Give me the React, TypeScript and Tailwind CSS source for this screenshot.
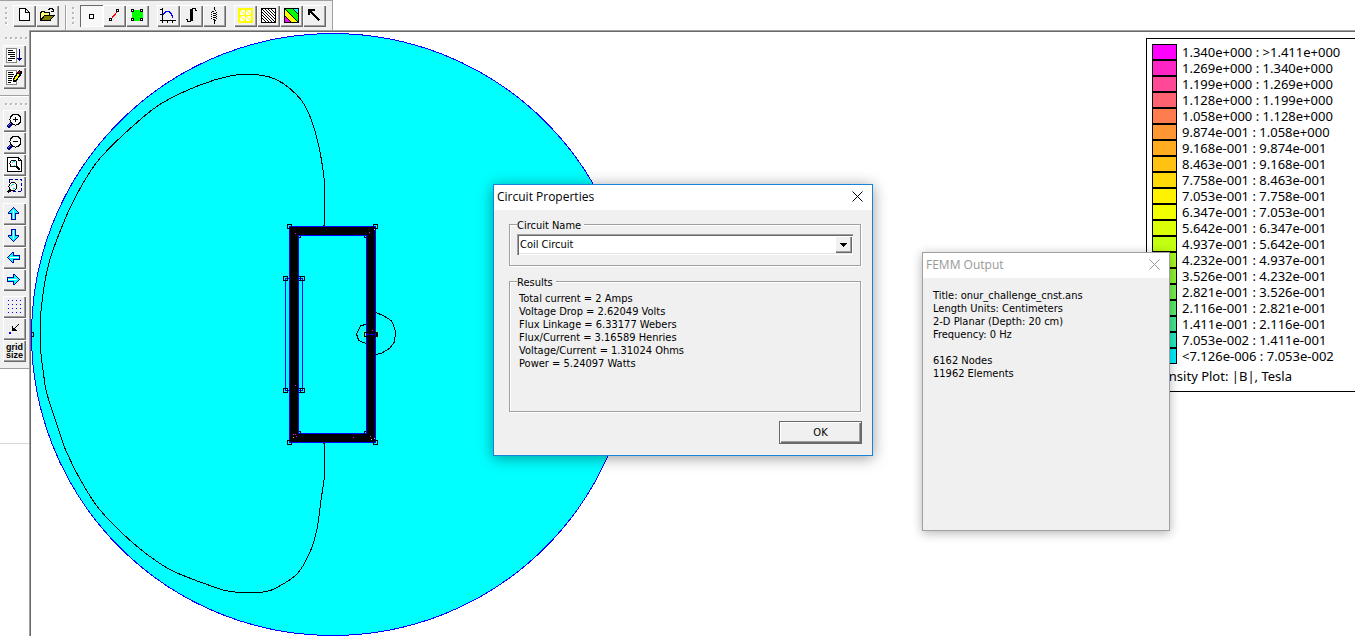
import type { ReactNode } from "react";

const BANDS: [string, string][] = [
  ["#ff00ff", "1.340e+000 : >1.411e+000"],
  ["#ff24c4", "1.269e+000 : 1.340e+000"],
  ["#ff4896", "1.199e+000 : 1.269e+000"],
  ["#ff6270", "1.128e+000 : 1.199e+000"],
  ["#ff7c4e", "1.058e+000 : 1.128e+000"],
  ["#ff9634", "9.874e-001 : 1.058e+000"],
  ["#ffac20", "9.168e-001 : 9.874e-001"],
  ["#ffc212", "8.463e-001 : 9.168e-001"],
  ["#ffda08", "7.758e-001 : 8.463e-001"],
  ["#fff200", "7.053e-001 : 7.758e-001"],
  ["#f2ff00", "6.347e-001 : 7.053e-001"],
  ["#daff06", "5.642e-001 : 6.347e-001"],
  ["#c2ff10", "4.937e-001 : 5.642e-001"],
  ["#a8fa20", "4.232e-001 : 4.937e-001"],
  ["#8ef634", "3.526e-001 : 4.232e-001"],
  ["#74f24e", "2.821e-001 : 3.526e-001"],
  ["#5aee6c", "2.116e-001 : 2.821e-001"],
  ["#40ea92", "1.411e-001 : 2.116e-001"],
  ["#24ecc0", "7.053e-002 : 1.411e-001"],
  ["#00f0ff", "<7.126e-006 : 7.053e-002"],
];

const RESULTS = [
  "Total current = 2 Amps",
  "Voltage Drop = 2.62049 Volts",
  "Flux Linkage = 6.33177 Webers",
  "Flux/Current = 3.16589 Henries",
  "Voltage/Current = 1.31024 Ohms",
  "Power = 5.24097 Watts",
];

function ToolButton({ label, pressed, children }: { label: string; pressed?: boolean; children: ReactNode }) {
  return (
    <button
      type="button"
      aria-label={label}
      aria-pressed={pressed}
      className={
        pressed
          ? "block h-[22px] w-[23px] shrink-0 bg-[#f8f8f8] shadow-[inset_1px_1px_0_#696969,inset_-1px_-1px_0_#fff]"
          : "block h-[22px] w-[23px] shrink-0 bg-[#f0f0f0] shadow-[inset_1px_1px_0_#fff,inset_-1px_-1px_0_#696969,inset_-2px_-2px_0_#a0a0a0]"
      }
    >
      {children}
    </button>
  );
}

function Icon({ children }: { children: ReactNode }) {
  return (
    <svg width="23" height="22" viewBox="0 0 23 22" shapeRendering="crispEdges" fill="none" stroke="#000" aria-hidden="true" className="block">
      {children}
    </svg>
  );
}

function Grip({ vertical }: { vertical?: boolean }) {
  return (
    <div className={vertical ? "flex flex-col gap-[3px]" : "flex gap-[3px]"} aria-hidden="true">
      {[0, 1, 2, 3, 4].slice(vertical ? 1 : 0).map((i) => (
        <span key={i} className="size-[2px] bg-[#b8b8b8] shadow-[1px_1px_0_#fff]" />
      ))}
    </div>
  );
}

function Magnifier({ mark }: { mark: "plus" | "minus" }) {
  return (
    <Icon>
      <path d="M8.5 13.5L4.5 17.5" stroke="#000080" strokeWidth="3" />
      <path d="M7.5 13.5L4.5 16.5" stroke="#7878d8" />
      <circle cx="12.5" cy="9.5" r="5.5" fill="#f8f8f8" />
      <path d="M10 9.5h5" />
      {mark === "plus" && <path d="M12.5 7v5" />}
    </Icon>
  );
}

const ARROW_ANGLE = { up: 0, right: 90, down: 180, left: 270 };

function BlockArrow({ to }: { to: keyof typeof ARROW_ANGLE }) {
  return (
    <Icon>
      <g transform={`rotate(${ARROW_ANGLE[to]} 10.5 10.5)`}>
        <path d="M10.5 4.5L5.5 9.5V10.5H8.5V16.5H12.5V10.5H15.5V9.5Z" fill="#00ffff" stroke="#0000a8" />
        <path d="M10.5 7v9" stroke="#fff" />
      </g>
    </Icon>
  );
}

function TopToolbar() {
  return (
    <div className="flex h-[30px] w-[333px] border-t border-r border-[#a0a0a0] bg-[#f0f0f0] pt-1" role="toolbar" aria-label="Main">
      <div className="flex w-[66px] border-r border-[#a0a0a0] pl-[5px]">
        <div className="w-2 pt-[2px]"><Grip vertical /></div>
        <ToolButton label="New">
          <Icon><path d="M6.5 3.5h6l4 4v8h-10zM12.5 3.5v4h4" fill="#fff" /></Icon>
        </ToolButton>
        <ToolButton label="Open">
          <Icon>
            <path d="M4.5 15.5v-8h1v-1h3v1h5v3" fill="#ffff70" />
            <path d="M4.5 15.5L8.5 10.5H18L14 15.5Z" fill="#808000" />
            <path d="M12 4.5h1v-1h3v1h1v2M14.5 6.5h3v-2" />
          </Icon>
        </ToolButton>
      </div>
      <div className="flex border-l border-white pl-[5px]">
        <div className="w-2 pt-[2px]"><Grip vertical /></div>
        <ToolButton label="Point" pressed>
          <Icon><rect x="9.5" y="9.5" width="4" height="4" fill="#fff" /></Icon>
        </ToolButton>
        <ToolButton label="Contour">
          <Icon>
            <path d="M8 14L15 6" stroke="#f00" />
            <rect x="6.5" y="13.5" width="2" height="2" fill="#fff" />
            <rect x="13.5" y="4.5" width="2" height="2" fill="#fff" />
          </Icon>
        </ToolButton>
        <ToolButton label="Area">
          <Icon>
            <rect x="6" y="5" width="11" height="11" fill="#0f0" stroke="none" />
            <g fill="#fff">
              <rect x="5.5" y="4.5" width="2" height="2" /><rect x="14.5" y="4.5" width="2" height="2" />
              <rect x="5.5" y="13.5" width="2" height="2" /><rect x="14.5" y="13.5" width="2" height="2" />
            </g>
          </Icon>
        </ToolButton>
        <div className="ml-2 flex">
          <ToolButton label="Plot">
            <Icon>
              <path d="M5.5 3v15M3 15.5h15.5M3 4.5h2M3 9.5h2M10.5 15v3M15.5 15v3" />
              <path d="M6.5 10V8.5H7.5V7.5H8.5V6.5H12.5V7.5H13.5V8.5H14.5V10.5H15.5V13" stroke="#0000ff" />
            </Icon>
          </ToolButton>
          <ToolButton label="Integrate">
            <Icon>
              <path d="M11.5 4v12" strokeWidth="3" />
              <path d="M12 3.5h4M15.5 3v3M14.5 5.5h2M7 16.5h4M7.5 14v3M6 14.5h2" />
            </Icon>
          </ToolButton>
          <ToolButton label="Circuit">
            <Icon>
              <path d="M11.5 2v3M11.5 16v3M12 5.5h1M9 6.5h2M13 7.5h1M10 8.5h3M13 9.5h1M10 10.5h3M13 11.5h1M10 12.5h3M13 13.5h1M10 14.5h2M11 15.5h2M8 7.5h1M8 9.5h1M8 11.5h1M8 13.5h1" />
            </Icon>
          </ToolButton>
        </div>
        <div className="ml-2 flex">
          <ToolButton label="Show mesh">
            <Icon>
              <rect x="4.5" y="3.5" width="14" height="14" fill="#fffff0" stroke="#ff0" />
              <rect x="5.5" y="4.5" width="12" height="12" stroke="#ff0" />
              <path d="M11.5 4v13M5 10.5h13M6 5l5 5M12 5l5 5M6 11l5 5M12 11l5 5" stroke="#ff0" />
            </Icon>
          </ToolButton>
          <ToolButton label="Contour plot">
            <Icon>
              <rect x="4.5" y="3.5" width="14" height="14" fill="#fff" />
              <path d="M5 4L18 17M8 4L18 14M11 4L18 11M14 4L18 8M5 7L15 17M5 10L12 17M5 13L9 17" />
            </Icon>
          </ToolButton>
          <ToolButton label="Density plot">
            <Icon>
              <rect x="4.5" y="3.5" width="14" height="14" fill="#ff0" />
              <path d="M5 4h8l5 5v8z" fill="#0f0" stroke="none" />
              <path d="M13 4h5v5z" fill="#0ff" stroke="none" />
              <path d="M5 11v6h6z" fill="#f0f" stroke="none" />
              <path d="M5 4L18 17M13 4l5 5M5 11l6 6M4.5 3.5h14v14h-14z" />
            </Icon>
          </ToolButton>
          <ToolButton label="Vector plot">
            <Icon>
              <path d="M6 5L16.5 15.5" strokeWidth="2" />
              <path d="M5 10V4h7v2H8L7 7v3z" fill="#000" stroke="none" />
            </Icon>
          </ToolButton>
        </div>
      </div>
    </div>
  );
}

function SideToolbar() {
  return (
    <div className="flex h-[339px] flex-col border-b border-[#a0a0a0] bg-[#f0f0f0] pl-[3px]" role="toolbar" aria-label="View">
      <div className="pt-[7px] pb-[6px] pl-[2px]"><Grip /></div>
      <ToolButton label="Output window">
        <Icon>
          <rect x="3.5" y="3.5" width="10" height="14" fill="#fff" stroke="#888" />
          <path d="M5 5.5h5M5 7.5h7M5 9.5h7M7 11.5h5M5 13.5h7M5 15.5h4" />
          <path d="M16.5 4v12M14 13.5h5M15 14.5h3" stroke="#000080" />
        </Icon>
      </ToolButton>
      <ToolButton label="Lua console">
        <Icon>
          <rect x="3.5" y="3.5" width="10" height="14" fill="#fff" stroke="#888" />
          <path d="M5 5.5h5M5 7.5h6M5 9.5h5M5 11.5h4M5 13.5h4M5 15.5h3" />
          <path d="M10.5 14.5V12L14.500 5.500L16.500 3.500L18.500 5L17.500 8L13 14Z" fill="#000" />
          <path d="M12 13L15.500 7.500" stroke="#ff0" strokeWidth="2" />
          <path d="M15.500 6L17 4.500" stroke="#c00" strokeWidth="2" />
        </Icon>
      </ToolButton>
      <div className="-ml-[3px] mt-[6px] border-t border-[#a0a0a0] pt-[7px] pb-[5px] pl-[5px] shadow-[inset_0_1px_0_#fff]"><Grip /></div>
      <ToolButton label="Zoom in"><Magnifier mark="plus" /></ToolButton>
      <ToolButton label="Zoom out"><Magnifier mark="minus" /></ToolButton>
      <ToolButton label="Zoom to page">
        <Icon>
          <path d="M4.5 3.5h11l3 3v11h-14zM15.5 3.5v3h3" fill="#fff" />
          <circle cx="10.5" cy="9.5" r="3.5" fill="#fff" />
          <path d="M9 8.5h1M10 7.5h2M11 11.5h1" stroke="#0dd" />
          <path d="M13 12L17 16" strokeWidth="2" />
        </Icon>
      </ToolButton>
      <ToolButton label="Zoom to window">
        <Icon>
          <rect x="6.5" y="3.5" width="12" height="12" stroke="#0000a0" strokeDasharray="3 2" />
          <circle cx="10" cy="10.5" r="4" fill="#f8f8f8" />
          <path d="M8 9.5h1M9 8.5h2M10 12.5h2" stroke="#0dd" />
          <path d="M7.5 13.5L4.5 16.5" strokeWidth="2" />
        </Icon>
      </ToolButton>
      <div className="mt-[5px] flex flex-col">
        <ToolButton label="Pan up"><BlockArrow to="up" /></ToolButton>
        <ToolButton label="Pan down"><BlockArrow to="down" /></ToolButton>
        <ToolButton label="Pan left"><BlockArrow to="left" /></ToolButton>
        <ToolButton label="Pan right"><BlockArrow to="right" /></ToolButton>
      </div>
      <div className="mt-[5px] flex flex-col">
        <ToolButton label="Show grid">
          <Icon>
            <path d="M5 4.5h14M5 8.5h14M5 12.5h14M5 16.5h14" stroke="#0000ff" strokeDasharray="1 3" />
          </Icon>
        </ToolButton>
        <ToolButton label="Snap to grid">
          <Icon>
            <path d="M16 6L10 12M9.500 8v4.500h4.500M10.500 10v1.500h2" />
            <rect x="6" y="14" width="2" height="2" fill="#00f" stroke="none" />
          </Icon>
        </ToolButton>
        <ToolButton label="Grid size">
          <span className='block text-center font-["Liberation_Sans",sans-serif] text-[9px] leading-[8px] font-bold text-black'>grid<br />size</span>
        </ToolButton>
      </div>
    </div>
  );
}

function Node({ x, y }: { x: number; y: number }) {
  return <rect x={x - 2 + 0.5} y={y - 2 + 0.5} width="4" height="4" fill="none" stroke="#000" />;
}

type Point = [number, number];

const FLUX_LINE: Point[] = [
  [323.5, 226], [324.5, 222], [324.5, 184], [320.5, 154.5], [315.5, 133], [310, 116.5], [301.5, 100.5], [288, 87],
  [275, 79], [263, 75.5], [248, 74.5], [230, 76], [200, 85], [163, 102.5], [138, 121.5], [102, 156], [85, 180],
  [71, 206], [61, 229], [51, 256], [45.5, 278], [42.5, 298], [40.5, 319], [40.5, 348], [43.5, 373], [47, 394],
  [62, 440], [67, 453], [80, 479], [100, 510], [133, 543], [163, 565.5], [182, 575], [217, 588], [230, 591.5],
  [248, 592.5], [263, 592], [275, 588.5], [297, 574], [310, 552], [317, 529], [321, 500], [324.5, 475], [324.5, 447],
  [323.5, 443],
];

/** Catmull-Rom spline through the given points, as cubic Bézier segments. */
function spline(points: Point[]) {
  let d = `M${points[0].join(" ")}`;
  for (let i = 0; i < points.length - 1; i++) {
    const a = points[Math.max(i - 1, 0)];
    const b = points[i];
    const c = points[i + 1];
    const e = points[Math.min(i + 2, points.length - 1)];
    d += `C${b[0] + (c[0] - a[0]) / 6} ${b[1] + (c[1] - a[1]) / 6} ${c[0] - (e[0] - b[0]) / 6} ${c[1] - (e[1] - b[1]) / 6} ${c[0]} ${c[1]}`;
  }
  return d;
}

function FieldPlot() {
  return (
    <svg width="600" height="604" viewBox="31 32 600 604" shapeRendering="crispEdges" className="block shrink-0" role="img" aria-label="Flux density plot">
      <circle cx="332.5" cy="334.5" r="301" fill="#00ffff" stroke="#0000ff" />
      <path d={spline(FLUX_LINE)} fill="none" stroke="#000" />
      <polyline points="376,312.500 384,316 391,320.500 393.500,325 395.500,332 394.500,342 390,348 382,353 376,354.500" fill="none" stroke="#000" />
      <path d="M289.5 226.5h86v216h-86z" fill="#000" stroke="#0000ff" />
      <path d="M298.5 235.5h68v198h-68z" fill="#00ffff" stroke="#0000ff" />
      <rect x="362" y="331" width="4" height="7" fill="#30ffc8" />
      <rect x="376" y="331" width="3" height="6" fill="#30ffc8" />
      <polyline points="366,324.500 361,325.500 358.500,330 356.500,334 358.500,340 362,342 366,343.500" fill="none" stroke="#000" />
      <path d="M289 278.500h-3.500v112h3.500M299 278.500h3.500v112H299" fill="none" stroke="#0000ff" />
      <Node x={289} y={226} /><Node x={375} y={226} /><Node x={289} y={442} /><Node x={375} y={442} />
      <Node x={285} y={278} /><Node x={302} y={278} /><Node x={285} y={390} /><Node x={302} y={390} />
      <path d="M287.500 276v5M287.500 388v5M300.500 276v5M300.500 388v5M299 276.500h2M299 280.500h2M299 388.500h2M299 392.500h2" stroke="#000" />
      <path d="M299 237.500h1.500V236M366 237.500h-1.500V236M299 431.500h1.500V434M366 431.500h-1.500V434" fill="none" stroke="#000" />
      <Node x={366} y={334} /><Node x={375} y={334} />
      <path d="M374.500 332v5M376.500 332v5" stroke="#000" />
      <path d="M367 334.500h2M370 334.500h4M375 334.500h1" stroke="#0000ff" />
      <path d="M31.500 332.500h2v4h-2" fill="none" stroke="#000" />
      <path d="M295 233.500h1M369 232.500h1M372 330.500h1M295 385.500h1M293 434.500h1M295 434.500h1M296 436.500h1M353 437.500h1M370 436.500h1" stroke="#ff00ff" />
      <path d="M374 229.500h1M374 438.500h1M371 439.500h1M293 437.500h1" stroke="#ffb020" />
    </svg>
  );
}

function Legend() {
  return (
    <div className='mt-[6px] h-[354px] w-[209px] shrink-0 border-y border-l border-black bg-white pt-[5px] pl-[5px] font-["Noto_Sans","Open_Sans",sans-serif] text-[13px] leading-4 text-black'>
      <ul>
        {BANDS.map(([color, text]) => (
          <li key={text} className="flex gap-[5px] whitespace-nowrap">
            <span className="h-4 w-[25px] border border-black" style={{ backgroundColor: color }} />
            {text}
          </li>
        ))}
      </ul>
      <p className="mt-1">Density Plot: |B|, Tesla</p>
    </div>
  );
}

function CloseGlyph() {
  return (
    <svg width="11" height="11" viewBox="0 0 11 11" stroke="currentColor" aria-hidden="true">
      <path d="M0.5 0.5l10 10M10.5 0.5l-10 10" />
    </svg>
  );
}

function TitleBar({ title, className }: { title: string; className: string }) {
  return (
    <div className={`flex h-[25px] items-center justify-between bg-white pr-[9px] pb-[2px] pl-[3px] font-["Open_Sans","Noto_Sans",sans-serif] text-[12px] ${className}`}>
      <h2>{title}</h2>
      <button type="button" aria-label={`Close ${title}`}><CloseGlyph /></button>
    </div>
  );
}

const GROUP = "border border-[#a0a0a0] px-[7px] shadow-[1px_1px_0_#fff,inset_1px_1px_0_#fff]";
const GROUP_TITLE = "bg-[#f0f0f0] pt-[2px] pr-[3px] leading-[13px]";

function CircuitDialog() {
  return (
    <section role="dialog" aria-label="Circuit Properties" className="absolute top-[184px] left-[493px] flex h-[272px] w-[380px] flex-col border border-[#1883d7] bg-[#f0f0f0] shadow-[0_2px_14px_rgba(0,0,0,0.4)]">
      <TitleBar title="Circuit Properties" className="text-black" />
      <div className="flex flex-1 flex-col pt-[7px] pr-[11px] pl-[15px]">
        <fieldset className={`${GROUP} h-[49px]`}>
          <legend className={GROUP_TITLE}>
            <label htmlFor="circuit">Circuit Name</label>
          </legend>
          <div className="relative mt-[2px] h-[21px] bg-white shadow-[inset_1px_1px_0_#a0a0a0,inset_2px_2px_0_#696969,inset_-1px_-1px_0_#fff,inset_-2px_-2px_0_#e3e3e3]">
            <select id="circuit" className="block h-[22px] w-full appearance-none bg-transparent pl-[3px] leading-[22px] outline-none">
              <option>Coil Circuit</option>
            </select>
            <span className="pointer-events-none absolute top-[2px] right-px flex h-[17px] w-[17px] items-center justify-center bg-[#f0f0f0] shadow-[inset_1px_1px_0_#fff,inset_-1px_-1px_0_#696969,inset_-2px_-2px_0_#a0a0a0]">
              <svg width="7" height="4" viewBox="0 0 7 4" shapeRendering="crispEdges" aria-hidden="true"><path d="M0 0h7v1h-1v1h-1v1h-1v1h-1v-1h-1v-1h-1v-1h-1z" /></svg>
            </span>
          </div>
        </fieldset>
        <fieldset className={`${GROUP} mt-2 h-[138px]`}>
          <legend className={GROUP_TITLE}>Results</legend>
          <div className="mt-[3px] pl-[2px] leading-[13px]">
            {RESULTS.map((line) => <p key={line}>{line}</p>)}
          </div>
        </fieldset>
        <button type="button" className="-mr-px mt-[9px] h-[23px] w-[83px] self-end border border-[#696969] bg-[#f0f0f0] pt-px shadow-[inset_1px_1px_0_#fff,inset_-1px_-1px_0_#696969,inset_-2px_-2px_0_#a0a0a0]">
          OK
        </button>
      </div>
    </section>
  );
}

function OutputDialog() {
  return (
    <section role="dialog" aria-label="FEMM Output" className="absolute top-[252px] left-[922px] h-[279px] w-[248px] border border-[#a0a0a0] bg-[#f0f0f0] shadow-[0_2px_10px_rgba(0,0,0,0.3)]">
      <TitleBar title="FEMM Output" className="text-[#999999]" />
      <div className="px-[10px] pt-[11px] leading-[13px]">
        <p>Title: onur_challenge_cnst.ans</p>
        <p>Length Units: Centimeters</p>
        <p>2-D Planar (Depth: 20 cm)</p>
        <p>Frequency: 0 Hz</p>
        <p className="mt-[13px]">6162 Nodes</p>
        <p>11962 Elements</p>
      </div>
    </section>
  );
}

export default function App() {
  return (
    <div className='relative flex min-h-screen flex-col overflow-hidden bg-white font-["DejaVu_Sans_Condensed","Noto_Sans",sans-serif] text-[11px] text-black'>
      <TopToolbar />
      <div className="flex flex-1">
        <aside className="flex w-[29px] shrink-0 flex-col">
          <SideToolbar />
          <div className="h-[75px] border-b border-[#d8d8d8]" />
        </aside>
        <main className="flex min-w-0 flex-1 justify-between border-t border-l border-[#a0a0a0] pt-px pl-px shadow-[inset_1px_1px_0_#696969]">
          <FieldPlot />
          <Legend />
        </main>
      </div>
      <CircuitDialog />
      <OutputDialog />
    </div>
  );
}
